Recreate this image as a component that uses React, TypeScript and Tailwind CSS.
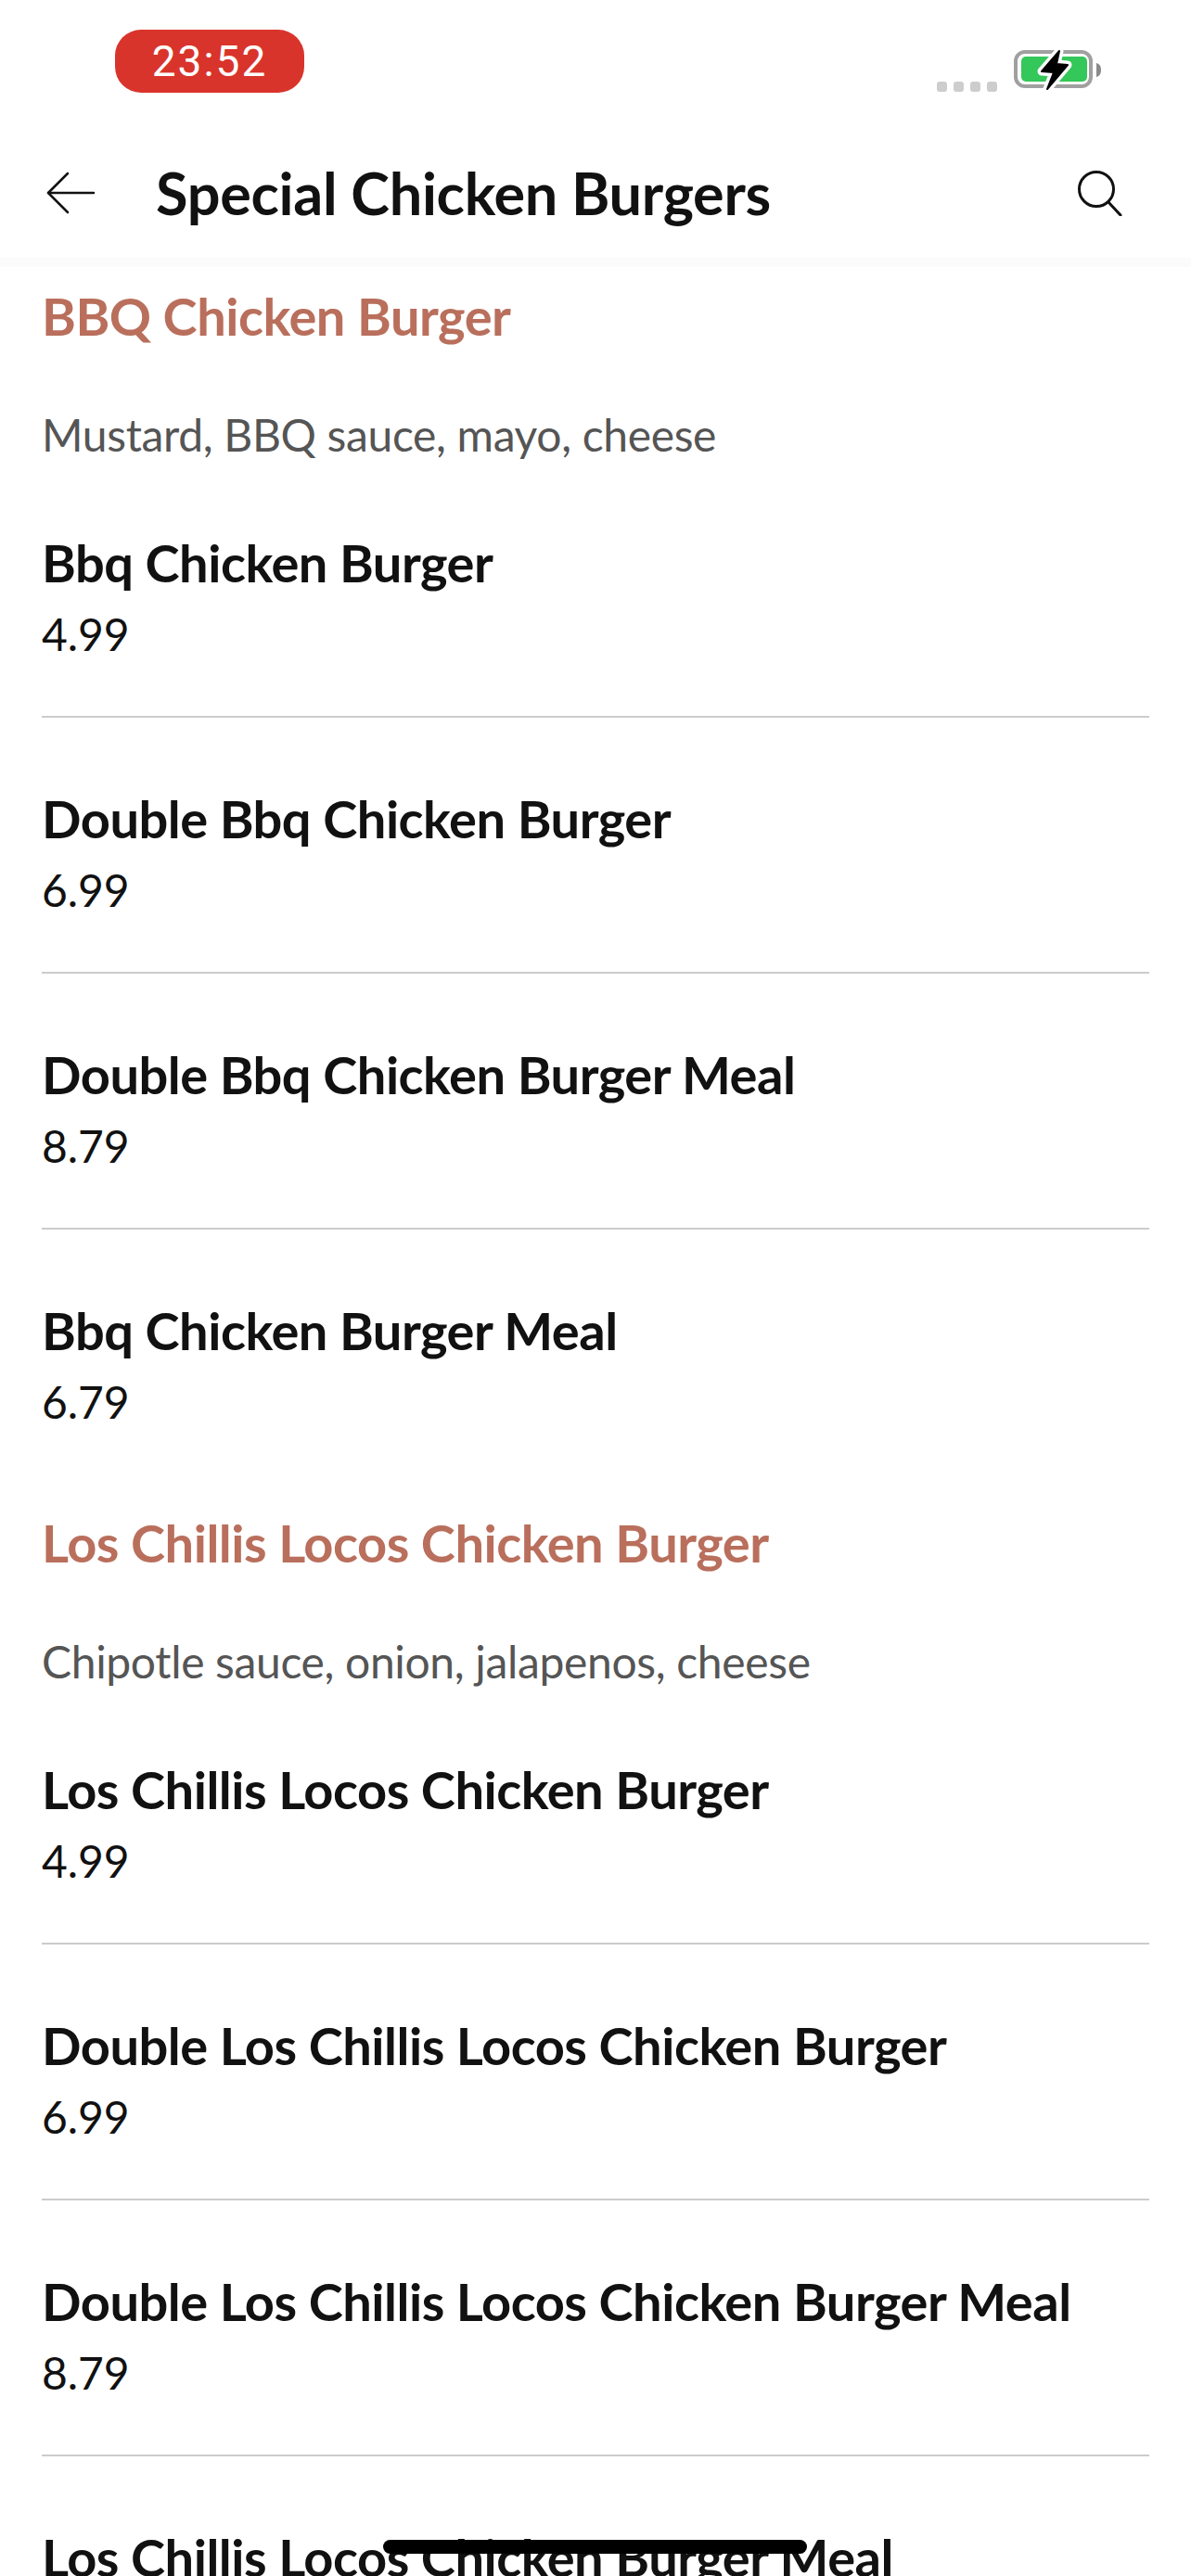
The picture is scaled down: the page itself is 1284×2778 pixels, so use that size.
import React from "react";

interface Item {
  name: string;
  price: string;
}

interface Section {
  title: string;
  description: string;
  items: Item[];
}

const sections: Section[] = [
  {
    title: "BBQ Chicken Burger",
    description: "Mustard, BBQ sauce, mayo, cheese",
    items: [
      { name: "Bbq Chicken Burger", price: "4.99" },
      { name: "Double Bbq Chicken Burger", price: "6.99" },
      { name: "Double Bbq Chicken Burger Meal", price: "8.79" },
      { name: "Bbq Chicken Burger Meal", price: "6.79" },
    ],
  },
  {
    title: "Los Chillis Locos Chicken Burger",
    description: "Chipotle sauce, onion, jalapenos, cheese",
    items: [
      { name: "Los Chillis Locos Chicken Burger", price: "4.99" },
      { name: "Double Los Chillis Locos Chicken Burger", price: "6.99" },
      { name: "Double Los Chillis Locos Chicken Burger Meal", price: "8.79" },
      { name: "Los Chillis Locos Chicken Burger Meal", price: "6.79" },
    ],
  },
];

const BOLT = "M49 4 L30 26 L43 27 L36 45 L58 19 L46 18 Z";

const Battery = () => (
  <svg width="96" height="48" viewBox="0 0 96 48" fill="none">
    <rect x="2" y="5" width="81" height="37" rx="10" stroke="#a0a0a0" strokeWidth="4" />
    <rect x="8" y="10" width="71" height="27" rx="5" fill="#34c759" />
    <path d="M89 17c3 .8 5 3 5 7.500s-2 6.700-5 7.500z" fill="#8a8a8a" />
    <path d={BOLT} fill="#000" stroke="#fff" strokeWidth="9" strokeLinejoin="round" />
    <path d={BOLT} fill="#000" stroke="#000" strokeWidth="2" strokeLinejoin="round" />
  </svg>
);

const StatusBar = () => (
  <div className="flex justify-between pt-[32px] pl-[124px] pr-[95px]">
    <div className="w-[204px] h-[68px] rounded-[28px] bg-[#d9342b] flex items-center justify-center text-white text-[46px] tracking-[2px] font-['Roboto',sans-serif]">
      23:52
    </div>
    <div className="flex items-end gap-[18px] h-[67px]">
      <div className="flex gap-[7px]">
        <span className="w-[11px] h-[11px] rounded-[3px] bg-[#cdcdcd]" />
        <span className="w-[11px] h-[11px] rounded-[3px] bg-[#cdcdcd]" />
        <span className="w-[11px] h-[11px] rounded-[3px] bg-[#cdcdcd]" />
        <span className="w-[11px] h-[11px] rounded-[3px] bg-[#cdcdcd]" />
      </div>
      <Battery />
    </div>
  </div>
);

const Header = () => (
  <div className="h-[278px] bg-white">
    <StatusBar />
    <div className="flex items-center h-[72px] mt-[72px] pl-[50px] pr-[74px]">
      <svg width="54" height="46" viewBox="0 0 54 46" fill="none" stroke="#111" strokeWidth="2.500" strokeLinecap="round" strokeLinejoin="round">
        <path d="M51 23 H2" />
        <path d="M23 2 L2 23 L23 44" />
      </svg>
      <h1 className="ml-[64px] flex-1 text-[63px] leading-[72px] tracking-[-0.3px] font-bold text-[#111] font-['Lato',sans-serif]">
        Special Chicken Burgers
      </h1>
      <svg width="50" height="50" viewBox="0 0 50 50" fill="none" stroke="#111" strokeWidth="3" strokeLinecap="round">
        <circle cx="22" cy="21" r="18.500" />
        <path d="M35 35 L48 49" />
      </svg>
    </div>
  </div>
);

const MenuRow = ({ item, last }: { item: Item; last: boolean }) => (
  <div className={`pt-[73px] border-b-2 ${last ? "pb-[57px] border-transparent" : "pb-[58px] border-[#cccccc]"}`}>
    <div className="text-[56px] leading-[72px] tracking-[-0.5px] font-bold text-[#111] whitespace-nowrap">{item.name}</div>
    <div className="mt-[11px] text-[48px] leading-[60px] tracking-[-0.1px] text-[#111]">{item.price}</div>
  </div>
);

const MenuSection = ({ section }: { section: Section }) => (
  <section className="pt-[28px]">
    <h2 className="text-[56px] leading-[70px] tracking-[-0.5px] font-bold text-[#b96f5c]">{section.title}</h2>
    <p className="mt-[63px] text-[48px] leading-[59px] tracking-[-0.35px] text-[#555555]">{section.description}</p>
    {section.items.map((item, i) => (
      <MenuRow key={item.name} item={item} last={i === section.items.length - 1} />
    ))}
  </section>
);

export default function App() {
  return (
    <div className="relative w-[1284px] h-[2778px] overflow-hidden bg-white font-['Lato',sans-serif]">
      <Header />
      <div className="px-[45px] border-t-[10px] border-[#fbfbfb]">
        <div className="-mt-[10px]">
          {sections.map((s) => (
            <MenuSection key={s.title} section={s} />
          ))}
        </div>
      </div>
      <div className="absolute left-[413px] top-[2739px] w-[457px] h-[15px] rounded-full bg-black" />
    </div>
  );
}
